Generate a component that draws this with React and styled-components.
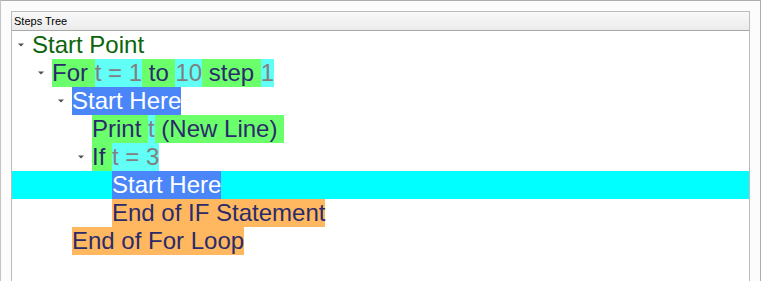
import * as React from "react";
import styled, { createGlobalStyle } from "styled-components";

const GlobalStyle = createGlobalStyle`
  html, body {
    margin: 0;
    padding: 0;
    background: #fcfcfc;
  }
`;

const Window = styled.div`
  box-sizing: border-box;
  width: 761px;
  height: 281px;
  overflow: hidden;
  border: 1px solid #adadad;
  border-bottom: none;
  border-left-color: #c4c4c4;
  background: #fcfcfc;
  padding: 10px 0 0 10px;
`;

const Panel = styled.div`
  box-sizing: border-box;
  width: 739px;
  height: 300px;
  border: 1px solid #bcbcbc;
  background: #ffffff;
  display: flex;
  flex-direction: column;
`;

const Header = styled.div`
  height: 18px;
  line-height: 19px;
  padding-left: 2px;
  border-bottom: 1px solid #a8a8a8;
  background: linear-gradient(#f9f9f9, #ebebeb);
  font-family: "Liberation Sans", Arial, sans-serif;
  font-size: 11px;
  color: #000;
`;

const Tree = styled.div`
  display: flex;
  flex-direction: column;
  font-family: "Liberation Sans", Arial, sans-serif;
  font-size: 24px;
`;

const Row = styled.div`
  display: flex;
  align-items: stretch;
  height: 28px;
  line-height: 28px;
  padding-left: ${(p) => p.$level * 20}px;
  background: ${(p) => (p.$selected ? "#00ffff" : "transparent")};
  white-space: pre;
`;

const Expander = styled.div`
  width: 20px;
  flex: none;
  display: flex;
  align-items: center;
  justify-content: flex-end;
  padding-right: 8px;
  box-sizing: border-box;
`;

const segColors = {
  root: { bg: "transparent", fg: "#0b640b" },
  kw: { bg: "#6cff6c", fg: "#2b2b6b" },
  val: { bg: "#62fff6", fg: "#808080" },
  block: { bg: "#4a86f8", fg: "#ffffff" },
  end: { bg: "#ffb85f", fg: "#2b2b6b" },
};

const Segment = styled.span`
  background: ${(p) => segColors[p.$kind].bg};
  color: ${(p) => segColors[p.$kind].fg};
`;

function Arrow() {
  return (
    <svg width="6" height="4" viewBox="0 0 6 4">
      <polygon points="0,0.5 6,0.5 3,3.5" fill="#4f4f4f" />
    </svg>
  );
}

const rows = [
  { level: 0, open: true, segs: [["root", "Start Point"]] },
  {
    level: 1,
    open: true,
    segs: [
      ["kw", "For "],
      ["val", "t = 1"],
      ["kw", " to "],
      ["val", "10"],
      ["kw", " step "],
      ["val", "1"],
    ],
  },
  { level: 2, open: true, segs: [["block", "Start Here"]] },
  {
    level: 3,
    segs: [
      ["kw", "Print "],
      ["val", "t"],
      ["kw", " (New Line) "],
    ],
  },
  {
    level: 3,
    open: true,
    segs: [
      ["kw", "If "],
      ["val", "t = 3"],
    ],
  },
  { level: 4, selected: true, segs: [["block", "Start Here"]] },
  { level: 4, segs: [["end", "End of IF Statement"]] },
  { level: 2, segs: [["end", "End of For Loop"]] },
];

export default function App() {
  return (
    <>
      <GlobalStyle />
      <Window>
        <Panel>
          <Header>Steps Tree</Header>
          <Tree>
            {rows.map((row, i) => (
              <Row key={i} $level={row.level} $selected={row.selected}>
                <Expander>{row.open && <Arrow />}</Expander>
                {row.segs.map(([kind, text], j) => (
                  <Segment key={j} $kind={kind}>
                    {text}
                  </Segment>
                ))}
              </Row>
            ))}
          </Tree>
        </Panel>
      </Window>
    </>
  );
}
